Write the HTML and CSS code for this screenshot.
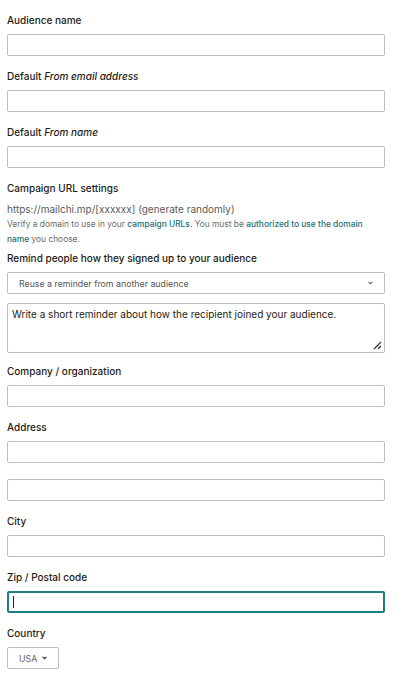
FILE: index.html
```html
<!DOCTYPE html>
<html>
<head>
<meta charset="utf-8">
<link rel="stylesheet" href="styles.css">
</head>
<body>
<form class="form">
  <div class="field">
    <label class="label">Audience name</label>
    <input class="input" type="text">
  </div>
  <div class="field">
    <label class="label">Default <em>From email address</em></label>
    <input class="input" type="text">
  </div>
  <div class="field">
    <label class="label">Default <em>From name</em></label>
    <input class="input" type="text">
  </div>
  <div class="field url-field">
    <div class="label">Campaign URL settings</div>
    <div class="url">https://mailchi.mp/[xxxxxx] (generate randomly)</div>
    <p class="help">Verify a domain to use in your <span class="link">campaign URLs</span>. You must be <span class="link">authorized to use the domain</span><br><span class="link">name</span> you choose.</p>
  </div>
  <div class="field remind">
    <label class="label">Remind people how they signed up to your audience</label>
    <div class="select wide">
      <span>Reuse a reminder from another audience</span>
      <svg class="chev" width="5" height="4" viewBox="0 0 5 4"><path d="M0.6 0.8l1.9 1.9L4.4 0.8" fill="none" stroke="#666" stroke-width="1.1"/></svg>
    </div>
    <div class="textarea">Write a short reminder about how the recipient joined your audience.
      <svg class="grip" width="9" height="9" viewBox="0 0 9 9"><path d="M8 1L1 8M8 5L5 8" stroke="#333" stroke-width="1.2"/></svg>
    </div>
  </div>
  <div class="field">
    <label class="label">Company / organization</label>
    <input class="input" type="text">
  </div>
  <div class="field">
    <label class="label">Address</label>
    <input class="input" type="text">
    <input class="input second" type="text">
  </div>
  <div class="field">
    <label class="label">City</label>
    <input class="input" type="text">
  </div>
  <div class="field">
    <label class="label">Zip / Postal code</label>
    <div class="input focused"><span class="caret"></span></div>
  </div>
  <div class="field">
    <label class="label">Country</label>
    <div class="select small">
      <span>USA</span>
      <svg class="chev" width="5" height="4" viewBox="0 0 5 4"><path d="M0.6 0.8l1.9 1.9L4.4 0.8" fill="none" stroke="#333" stroke-width="1.2"/></svg>
    </div>
  </div>
</form>
</body>
</html>
```
FILE: styles.css
```css
* { box-sizing: border-box; }
html, body { margin: 0; background: #fff; }
body {
  padding: 13px 13px 0 7px;
  font-family: Inter, "Noto Sans", sans-serif;
  color: #241c15;
}
.form { display: flex; flex-direction: column; }
.field { display: flex; flex-direction: column; margin-bottom: 13px; }
.label {
  display: block;
  font-size: 10px;
  line-height: 14px;
  font-weight: 500;
  margin-bottom: 7px;
  color: #241c15;
}
.label em { font-style: italic; }
.input {
  display: block;
  width: 378px;
  height: 22px;
  border: 1px solid #bdbdbd;
  border-radius: 2px;
  background: #fff;
  font: inherit;
  margin: 0;
  padding: 0 5px;
}
.input.second { margin-top: 16px; }
.input.focused {
  border: 2px solid #1b7f86;
  display: flex;
  align-items: center;
  padding-left: 4px;
}
.caret { width: 1px; height: 12px; background: #241c15; }
.url {
  font-size: 10px;
  line-height: 14px;
  color: #5a5a5a;
}
.help {
  margin: 1px 0 0;
  font-size: 8.4px;
  line-height: 15px;
  color: #6b6b6b;
  width: 380px;
}
.link { color: #1b6f78; font-weight: 500; }
.url-field { margin-bottom: 4px; }
.select {
  display: flex;
  align-items: center;
  justify-content: space-between;
  height: 22px;
  border: 1px solid #bdbdbd;
  border-radius: 2px;
  font-size: 8.8px;
  color: #555;
}
.select.wide { width: 378px; padding: 0 11px 0 11px; }
.select.small { width: 52px; padding: 0 11px 0 11px; color: #5d6470; }
.textarea {
  position: relative;
  margin-top: 9px;
  width: 378px;
  height: 50px;
  border: 1px solid #bdbdbd;
  border-radius: 2px;
  padding: 3px 4px;
  font-size: 10px;
  line-height: 14px;
  color: #241c15;
}
.grip { position: absolute; right: 2px; bottom: 2px; }
.remind { margin-bottom: 11px; }
```
